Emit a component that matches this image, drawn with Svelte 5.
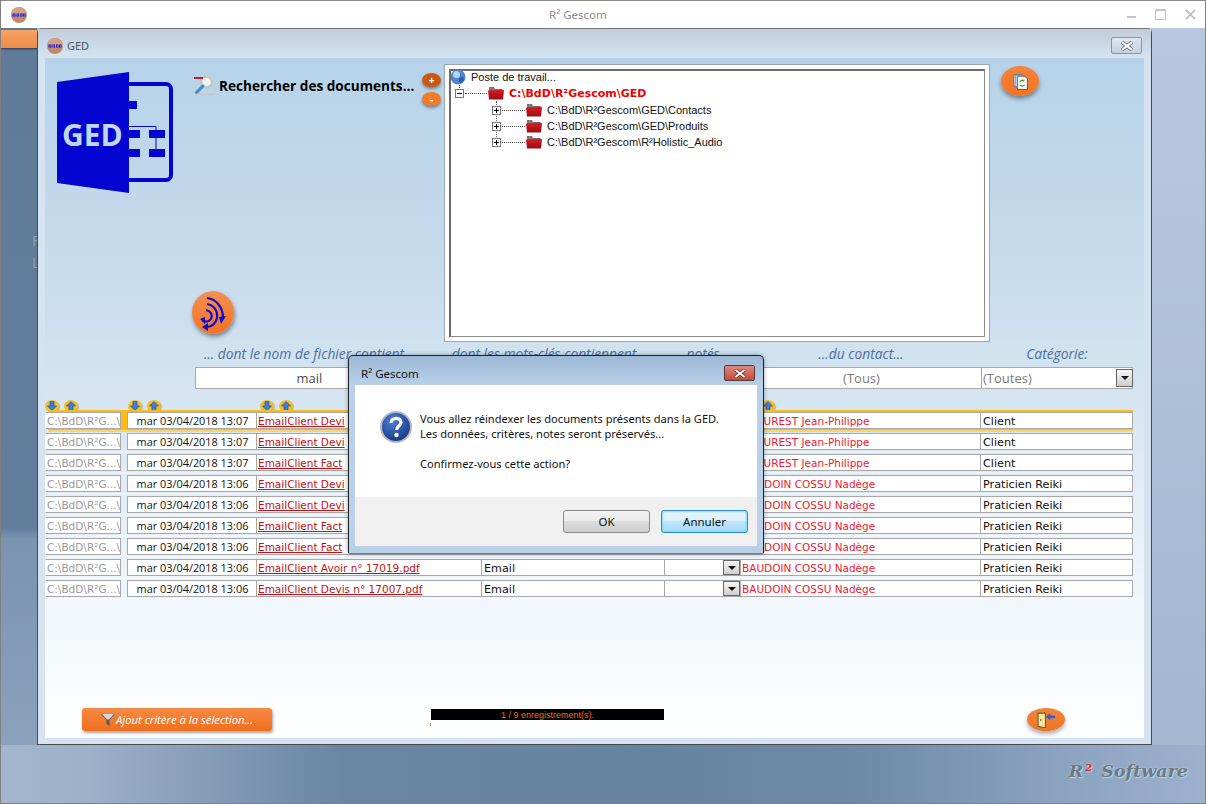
<script>
  const rows = [
    ['mar 03/04/2018 13:07', 'EmailClient Devi', '', 'AFOUREST Jean-Philippe', 'Client', true],
    ['mar 03/04/2018 13:07', 'EmailClient Devi', '', 'AFOUREST Jean-Philippe', 'Client'],
    ['mar 03/04/2018 13:07', 'EmailClient Fact', '', 'AFOUREST Jean-Philippe', 'Client'],
    ['mar 03/04/2018 13:06', 'EmailClient Devi', '', 'BAUDOIN COSSU Nadège', 'Praticien Reiki'],
    ['mar 03/04/2018 13:06', 'EmailClient Devi', '', 'BAUDOIN COSSU Nadège', 'Praticien Reiki'],
    ['mar 03/04/2018 13:06', 'EmailClient Fact', '', 'BAUDOIN COSSU Nadège', 'Praticien Reiki'],
    ['mar 03/04/2018 13:06', 'EmailClient Fact', '', 'BAUDOIN COSSU Nadège', 'Praticien Reiki'],
    ['mar 03/04/2018 13:06', 'EmailClient Avoir n° 17019.pdf', 'Email', 'BAUDOIN COSSU Nadège', 'Praticien Reiki'],
    ['mar 03/04/2018 13:06', 'EmailClient Devis n° 17007.pdf', 'Email', 'BAUDOIN COSSU Nadège', 'Praticien Reiki']
  ];
  const subfolders = ['C:\\BdD\\R²Gescom\\GED\\Contacts', 'C:\\BdD\\R²Gescom\\GED\\Produits', 'C:\\BdD\\R²Gescom\\R²Holistic_Audio'];
  const sortGroups = [['g1', 2], ['g2', 2], ['g3', 2], ['g4', 1]];
</script>

{#snippet appIcon()}
  <svg class="appicon" viewBox="0 0 16 16" aria-hidden="true">
    <circle cx="8" cy="8" r="8" fill="#c08a68" />
    <path d="M0 8a8 8 0 0 1 16 0z" fill="#d3a283" />
    <path d="M1.500 6.500h3v3h-3zM5.500 6.500h2.500v3h-2.500zM9 6.500h2.500v3h-2.500zM12 6.500h2.500v3h-2.500z" fill="#1414e6" />
    <path d="M2.500 7.500h1v1h-1zM6.300 7.500h1v1h-1zM9.800 7.500h1v1h-1zM12.800 7.500h1v1h-1z" fill="#d3c0c0" />
  </svg>
{/snippet}

{#snippet folder()}
  <svg class="folder" viewBox="0 0 16 14" aria-hidden="true">
    <defs>
      <linearGradient id="fg" x1="0" y1="0" x2="0" y2="1"><stop offset="0" stop-color="#dc1c24" /><stop offset="1" stop-color="#9c0c14" /></linearGradient>
    </defs>
    <path d="M1 1h5l1 2h7v3H1z" fill="#7a7a7a" />
    <path d="M0 4.500l15-1 1 1-1 9H1z" fill="url(#fg)" />
  </svg>
{/snippet}

{#snippet expander(sign)}
  <span class="expander">{#if sign === '+'}<i class="vbar"></i>{/if}<i class="hbar"></i></span>
{/snippet}

{#snippet dropBtn()}
  <span class="dropbtn"><i></i></span>
{/snippet}

{#snippet sortBtn(up)}
  <span class="sort">
    <svg viewBox="0 0 10 10" aria-hidden="true">
      {#if up}
        <path d="M5 .5L9.500 5H7v4.500H3V5H.5z" fill="#3a7ee6" stroke="#1b3f9c" stroke-width=".6" />
      {:else}
        <path d="M5 9.500L9.500 5H7V.5H3V5H.5z" fill="#3a7ee6" stroke="#1b3f9c" stroke-width=".6" />
      {/if}
    </svg>
  </span>
{/snippet}

<div class="screen">
  <header class="titlebar">
    {@render appIcon()}
    <span class="apptitle">R² Gescom</span>
    <div class="winctl">
      <span class="min"></span>
      <span class="max"></span>
      <svg class="x" viewBox="0 0 12 12" aria-hidden="true"><path d="M1 1l10 10M11 1L1 11" stroke="#c0c0c0" stroke-width="2" /></svg>
    </div>
  </header>

  <div class="desktop">
    <div class="tab"></div>
    <div class="ghost gh1">F</div>
    <div class="ghost gh2">L</div>

    <section class="ged">
      <div class="gedtitle">
        {@render appIcon()}
        <span>GED</span>
        <button class="gedclose" aria-label="Fermer">
          <svg viewBox="0 0 12 9" aria-hidden="true"><path d="M1.500 1l9 7M10.500 1l-9 7" stroke="#5e6876" stroke-width="3.400" /><path d="M1.500 1l9 7M10.500 1l-9 7" stroke="#fff" stroke-width="1.800" /></svg>
        </button>
      </div>

      <div class="panel">
        <div class="top">
          <svg class="logo" viewBox="0 0 117 122" aria-hidden="true">
            <path d="M71 12h38a5 5 0 0 1 5 5v86a5 5 0 0 1-5 5H71" fill="none" stroke="#0505d2" stroke-width="4" />
            <path d="M0 10L72 0V121L0 111z" fill="#0505d2" />
            <path d="M71 29h9v8h-9zM71 58h12v8H71zM71 77h12v8H71zM92 58h16v8H92zM92 77h16v8H92z" fill="#0505d2" />
            <path d="M71 54.500h28v3.500M99 66v11" fill="none" stroke="#0505d2" stroke-width="1" />
            <text x="5" y="74" class="logotext">GED</text>
          </svg>

          <div class="searchcol">
            <div class="heading">
              <svg viewBox="0 0 20 22" aria-hidden="true">
                <circle cx="12.500" cy="8" r="5.500" fill="#eef3f6" stroke="#c4c4c4" stroke-width="2.400" />
                <path d="M9 12L2.500 18.500" stroke="#3f8fc4" stroke-width="3" stroke-linecap="round" />
                <path d="M0 4h9" stroke="#c02028" stroke-width="2" />
                <path d="M2 20.500h17" stroke="#c6c6c6" stroke-width="1.200" />
              </svg>
              <h1>Rechercher des documents...</h1>
            </div>
            <button class="bigbtn" aria-label="Réindexer">
              <svg viewBox="0 0 42 43" aria-hidden="true">
                <g fill="none" stroke="#0a0ad8" stroke-width="2.200">
                  <path d="M15 7C24 8 31 16 31 27" />
                  <path d="M15 13C22 14 26 20 25 27C24 32 20 36 15 36" />
                  <path d="M14 19C19 20 21 24 19 28C17 31 13 31 11 30" />
                </g>
                <path d="M27 26l7-1-5 8zM16 32v8l-6-4zM13 26v7l-5-5z" fill="#0a0ad8" />
              </svg>
            </button>
          </div>

          <div class="plusminus">
            <button class="pm dark">+</button>
            <button class="pm">-</button>
          </div>

          <div class="treebox">
            <div class="tree">
              <i class="vline v1"></i>
              <i class="vline v2"></i>
              <div class="tnode root">
                <svg class="globe" viewBox="0 0 16 16" aria-hidden="true">
                  <circle cx="8" cy="8" r="7.500" fill="#4f86d0" />
                  <circle cx="6.500" cy="5.500" r="3.500" fill="#b9d2ef" />
                  <path d="M9 9l4-1 1 3-3 3-2-1z" fill="#2c5fb0" />
                </svg>
                <span>Poste de travail...</span>
              </div>
              <div class="tnode lvl1">
                {@render expander('-')}<i class="dots d1"></i>
                {@render folder()}
                <b>C:\BdD\R²Gescom\GED</b>
              </div>
              {#each subfolders as f}
                <div class="tnode lvl2">
                  {@render expander('+')}<i class="dots d2"></i>
                  {@render folder()}
                  <span class="ftext">{f}</span>
                </div>
              {/each}
            </div>
          </div>

          <button class="refresh" aria-label="Actualiser">
            <svg viewBox="0 0 16 16" aria-hidden="true">
              <path d="M1.500 1.500h8v11h-8z" fill="#c9d6ea" stroke="#50668c" stroke-width=".6" />
              <path d="M3 2h8v11H3z" fill="#dfe8f5" stroke="#50668c" stroke-width=".6" />
              <path d="M5 3h7l2.500 2.500v10H5z" fill="#f6f8fb" stroke="#3c5a8c" stroke-width=".9" />
              <path d="M7.500 8.500a2.300 2.300 0 0 1 4-.8M11.800 11a2.300 2.300 0 0 1-4 .3" fill="none" stroke="#5a9a1c" stroke-width="1.200" />
            </svg>
          </button>
        </div>

        <div class="labels fgrid">
          <span class="firstlabel">... dont le nom de fichier contient</span>
          <span>dont les mots-clés contiennent</span>
          <span>notés</span>
          <span>...du contact...</span>
          <span>Catégorie:</span>
        </div>

        <div class="filters fgrid">
          <span class="finput">mail</span>
          <span class="finput"></span>
          <span class="finput"></span>
          <span class="finput muted">(Tous)</span>
          <span class="finput muted left">(Toutes) <span class="catdrop">{@render dropBtn()}</span></span>
        </div>

        <div class="sortrow">
          {#each sortGroups as g}
            <span class="sortgroup {g[0]}">
              {#if g[1] === 2}{@render sortBtn(false)}{/if}
              {@render sortBtn(true)}
            </span>
          {/each}
        </div>

        <div class="rows">
          {#each rows as r}
            <div class="row" class:sel={r[5]}>
              <span class="cell path">C:\BdD\R²G...\</span>
              <span class="cell date">{r[0]}</span>
              <span class="cell link"><u>{r[1]}</u></span>
              <span class="cell txt">{r[2]}</span>
              <span class="cell notes">{@render dropBtn()}</span>
              <span class="cell contact">{r[3]}</span>
              <span class="cell txt">{r[4]}</span>
            </div>
          {/each}
        </div>

        <div class="footer">
          <button class="addcrit">
            <svg viewBox="0 0 14 14" aria-hidden="true">
              <path d="M0 1h14L8.500 7v6L5.500 11V7z" fill="#5a5a5a" />
              <path d="M1 1h12L8 6.500H6z" fill="#d8d8d8" />
            </svg>
            <span>Ajout critère à la sélection...</span>
          </button>
          <div class="status">
            <div class="statusbar">1 / 9 enregistrement(s).</div>
            <i class="tick"></i>
          </div>
          <button class="exit" aria-label="Quitter">
            <svg viewBox="0 0 17 15" aria-hidden="true">
              <path d="M1 1h7v14l-7-1.500z" fill="#f6e79a" stroke="#6a5c2c" stroke-width="1" />
              <path d="M3 6.500h1v2H3z" fill="#6a5c2c" />
              <path d="M8.500 4.500L12.500 1v2.200H17v2.600h-4.500V8z" fill="#2e62d0" />
            </svg>
          </button>
        </div>
      </div>
    </section>

    <div class="brand"><span>R</span><sup>2</sup><span class="sw">Software</span></div>
  </div>

  <div class="dialog" role="dialog">
    <div class="dtitle">
      <span>R² Gescom</span>
      <button class="dclose" aria-label="Fermer">
        <svg viewBox="0 0 12 9" aria-hidden="true"><path d="M1.500 1l9 7M10.500 1l-9 7" stroke="#5c2a22" stroke-width="3.200" /><path d="M1.500 1l9 7M10.500 1l-9 7" stroke="#fff" stroke-width="1.800" /></svg>
      </button>
    </div>
    <div class="dbody">
      <div class="dmsg">
        <svg class="qicon" viewBox="0 0 32 32" aria-hidden="true">
          <defs>
            <radialGradient id="qg" cx=".4" cy=".3" r=".8"><stop offset="0" stop-color="#4f7fd6" /><stop offset="1" stop-color="#10307c" /></radialGradient>
          </defs>
          <circle cx="16" cy="16" r="15" fill="url(#qg)" stroke="#b4b8be" stroke-width="2" />
          <path d="M11 12c0-6 10-6 10-.5 0 3.500-4.500 3.500-4.500 7.500" fill="none" stroke="#fff" stroke-width="3.200" />
          <circle cx="16.500" cy="24" r="2.200" fill="#fff" />
        </svg>
        <p>Vous allez réindexer les documents présents dans la GED.<br />Les données, critères, notes seront préservés...<br /><br />Confirmez-vous cette action?</p>
      </div>
      <div class="dfoot">
        <button class="dbtn">OK</button>
        <button class="dbtn focus">Annuler</button>
      </div>
    </div>
  </div>
</div>

<style>
  :global(body) { margin: 0; background: #8aa2bd; }
  .screen {
    position: relative;
    width: 1206px;
    height: 804px;
    box-sizing: border-box;
    border: 1px solid #808080;
    border-top-color: #888;
    display: flex;
    flex-direction: column;
    overflow: hidden;
    font-family: "Open Sans", sans-serif;
    background: linear-gradient(90deg, #a3b6ce 0, #9cb0c8 90px, #6a86a3 340px, #66839f 650px, #6d89a6 850px, #8ba3bf 1060px, #9db1cd 1206px);
  }
  button { font-family: inherit; padding: 0; cursor: default; }

  .titlebar { height: 27px; flex: none; background: #fff; display: flex; align-items: center; position: relative; }
  .appicon { width: 16px; height: 16px; flex: none; }
  .titlebar .appicon { margin-left: 10px; }
  .apptitle { position: absolute; left: 548px; top: 6px; font-size: 11.500px; color: #8d8d8d; font-family: "Noto Sans", sans-serif; }
  .winctl { margin-left: auto; display: flex; align-items: center; margin-right: 9px; }
  .min { width: 9px; height: 2px; background: #c4c4c4; margin-top: 4px; margin-right: 19px; }
  .max { width: 9px; height: 8px; border: 1px solid #c4c4c4; border-top-width: 2px; margin-right: 19px; }
  .x { width: 11px; height: 11px; }

  .desktop {
    flex: 1;
    position: relative;
    padding-left: 36px;
    background:
      linear-gradient(180deg, #5f7b99 0, #627e9c 500px, #7a93af 510px, #8aa2bc 717px) left top / 36px 717px no-repeat,
      linear-gradient(180deg, #b8c8e0 0, #a4b7d0 717px) right top / 55px 717px no-repeat;
  }
  .tab { position: absolute; left: 0; top: 2px; width: 37px; height: 18px; background: linear-gradient(180deg, #f7a364, #ee8c4a); box-shadow: 0 1px 2px #334; }
  .ghost { position: absolute; left: 31px; font-size: 14px; color: #8da2b8; }
  .gh1 { top: 203px; }
  .gh2 { top: 225px; }

  .ged {
    position: relative;
    width: 1115px;
    height: 717px;
    box-sizing: border-box;
    border: 1px solid #4a4a4a;
    border-top-color: #777;
    border-radius: 5px 5px 0 0;
    background: #d6e4f2;
    display: flex;
    flex-direction: column;
  }
  .gedtitle {
    height: 29px;
    flex: none;
    display: flex;
    align-items: center;
    padding-left: 9px;
    gap: 4px;
    font-size: 11px;
    color: #4a5568;
    font-family: "Noto Sans", sans-serif;
    background: linear-gradient(180deg, #c0ccd9, #d6e4f2);
  }
  .gedtitle > span { margin-top: 4px; }
  .gedtitle .appicon { margin-top: 4px; }
  .gedclose {
    margin-left: auto;
    margin-right: 9px;
    margin-top: 4px;
    width: 31px;
    height: 17px;
    border: 1px solid #8995ab;
    border-radius: 2px;
    background: linear-gradient(180deg, #dde6f0, #c5d2e2);
    display: flex;
    align-items: center;
    justify-content: center;
  }
  .gedclose svg { width: 14px; height: 10px; }

  .panel {
    margin: 0 7px;
    height: 680px;
    display: flex;
    flex-direction: column;
    background: linear-gradient(180deg, #b7d3e9 0, #c6dbec 30%, #d6e5f1 50%, #f0f6fb 80%, #ffffff 100%);
  }

  .top { height: 284px; flex: none; display: flex; align-items: flex-start; }
  .logo { width: 117px; height: 122px; margin: 14px 0 0 12px; flex: none; }
  .logotext { font-family: "Open Sans", sans-serif; font-weight: 700; font-size: 30px; fill: #c1d7ea; }
  .searchcol { width: 230px; height: 276px; margin-left: 18px; display: flex; flex-direction: column; }
  .heading { display: flex; align-items: center; gap: 5px; margin-top: 16px; }
  .heading svg { width: 20px; height: 22px; margin-left: 2px; flex: none; }
  .heading h1 { margin: 0; font-size: 13.600px; font-weight: 700; color: #000; white-space: nowrap; font-family: "Open Sans", sans-serif; }
  .bigbtn {
    margin-top: auto;
    width: 42px;
    height: 43px;
    border: 0;
    border-radius: 50%;
    background: linear-gradient(180deg, #f48f52, #f47320);
    box-shadow: 1px 3px 4px rgba(40, 50, 70, 0.5);
    display: flex;
  }
  .bigbtn svg { width: 42px; height: 43px; }

  .plusminus { display: flex; flex-direction: column; gap: 5px; margin-top: 15px; flex: none; }
  .pm {
    width: 19px;
    height: 14px;
    border: 0;
    border-radius: 50%;
    background: #f47a26;
    color: #fff;
    font-size: 10px;
    font-weight: 700;
    line-height: 14px;
    box-shadow: 0 2px 3px rgba(40, 50, 70, 0.5);
  }
  .pm.dark { background: #c9590f; }

  .treebox {
    margin: 6px 0 0 3px;
    width: 546px;
    height: 278px;
    box-sizing: border-box;
    flex: none;
    border: 1px solid #9aa6b0;
    padding: 4px;
    background: #fff;
  }
  .tree {
    height: 100%;
    box-sizing: border-box;
    border: 2px solid #6b6b6b;
    border-right: 1px solid #8c8c8c;
    border-bottom: 1px solid #8c8c8c;
    font-family: "Liberation Sans", sans-serif;
    font-size: 11px;
    color: #111;
    position: relative;
  }
  .tnode { display: flex; align-items: center; height: 16px; white-space: nowrap; position: relative; }
  .root { gap: 5px; margin-left: -1px; margin-top: -2px; }
  .globe { width: 16px; height: 16px; flex: none; }
  .lvl1 { padding-left: 4px; margin-bottom: 1px; }
  .lvl1 b { color: #f00000; font-family: "DejaVu Sans", sans-serif; font-size: 11px; margin-left: 5px; }
  .lvl2 { padding-left: 41px; }
  .ftext { margin-left: 5px; }
  .expander {
    position: relative;
    width: 9px;
    height: 9px;
    box-sizing: border-box;
    border: 1px solid #777;
    background: #fff;
    flex: none;
  }
  .hbar { position: absolute; left: 1px; top: 3px; width: 5px; height: 1px; background: #000; }
  .vbar { position: absolute; left: 3px; top: 1px; width: 1px; height: 5px; background: #000; }
  .dots { height: 0; border-top: 1px dotted #555; flex: none; }
  .d1 { width: 22px; margin: 0 1px; }
  .d2 { width: 23px; margin: 0 1px; }
  .vline { position: absolute; width: 0; border-left: 1px dotted #555; }
  .v1 { left: 8px; top: 14px; height: 5px; }
  .v2 { left: 45px; top: 30px; height: 44px; }
  .folder { width: 16px; height: 14px; flex: none; }

  .refresh {
    margin: 8px 0 0 11px;
    width: 38px;
    height: 30px;
    border: 0;
    border-radius: 50%;
    flex: none;
    background: linear-gradient(180deg, #f4843c, #f47320);
    box-shadow: 0 3px 4px rgba(40, 50, 70, 0.5);
    display: flex;
    align-items: center;
    justify-content: center;
  }
  .refresh svg { width: 17px; height: 17px; }

  .fgrid { display: grid; grid-template-columns: 228px 242px 76px 240px 152px; margin-left: 150px; flex: none; }
  .labels { height: 25px; box-sizing: border-box; padding-bottom: 2px; align-items: center; font-size: 13.800px; font-style: italic; color: #4c709c; text-align: center; white-space: nowrap; }
  .firstlabel { padding-right: 10px; }
  .filters { height: 22px; background: #fff; width: 938px; box-sizing: border-box; border: 1px solid #a8a8a8; }
  .finput { display: flex; align-items: center; justify-content: center; font-size: 13px; color: #4d4d4d; border-right: 1px solid #a8a8a8; position: relative; padding-bottom: 1px; }
  .finput:last-child { border-right: 0; }
  .finput.muted { color: #7b7b7b; }
  .finput.left { justify-content: flex-start; padding-left: 1px; }
  .catdrop { position: absolute; right: 1px; top: 1px; width: 17px; bottom: 1px; display: flex; }

  .dropbtn {
    display: flex;
    flex: none;
    width: 17px;
    height: 100%;
    box-sizing: border-box;
    border: 1px solid #666;
    background: linear-gradient(180deg, #f6f6f6, #cfcfcf);
    align-items: center;
    justify-content: center;
  }
  .dropbtn i { width: 0; height: 0; border: 4px solid transparent; border-top-color: #111; border-bottom-width: 0; }

  .sortrow { height: 23px; flex: none; position: relative; }
  .sortgroup { position: absolute; top: 11px; display: flex; gap: 5px; }
  .sortgroup.g1 { left: 0; }
  .sortgroup.g2 { left: 83px; }
  .sortgroup.g3 { left: 215px; }
  .sortgroup.g4 { left: 716px; }
  .sort { width: 14px; height: 12px; border-radius: 50%; background: #f4c020; display: flex; align-items: center; justify-content: center; box-shadow: 1px 1px 1px rgba(60, 60, 60, 0.3); }
  .sort svg { width: 10px; height: 10px; }

  .rows { display: flex; flex-direction: column; gap: 4px; flex: none; }
  .row {
    position: relative;
    isolation: isolate;
    display: grid;
    grid-template-columns: 82px 130px 225px 183px 76px 240px 152px;
    height: 17px;
    width: 1088px;
    font-family: "DejaVu Sans", sans-serif;
    font-size: 10.500px;
  }
  .row::after { content: ""; position: absolute; left: 3px; right: 0; top: 18px; height: 2px; background: rgba(255, 255, 255, 0.35); z-index: -1; }
  .row.sel::before { content: ""; position: absolute; left: 3px; right: 0; top: -2px; bottom: -3px; background: #fcbc12; z-index: -1; }
  .cell {
    display: flex;
    align-items: center;
    box-sizing: border-box;
    background: #fff;
    border: 1px solid #a8a8a8;
    border-left-width: 0;
    padding-left: 1px;
    white-space: nowrap;
    overflow: hidden;
  }
  .path { color: #9a9a9a; border-left-width: 1px; border-left-color: #fff; width: 76px; }
  .date { color: #111; justify-content: center; border-left-width: 1px; font-family: "Open Sans", sans-serif; font-size: 10.900px; }
  .link { color: #c41010; }
  .link u { text-decoration-thickness: 1px; text-underline-offset: 1px; }
  .txt { color: #111; font-size: 11.200px; padding-left: 2px; padding-top: 1px; }
  .contact { color: #f01830; }
  .notes { justify-content: flex-end; padding-left: 0; }

  .footer { margin-top: auto; height: 23px; flex: none; display: flex; align-items: flex-start; padding-bottom: 7px; }
  .addcrit {
    margin-left: 37px;
    width: 190px;
    height: 23px;
    border: 0;
    border-radius: 3px;
    background: linear-gradient(180deg, #f58a44, #ef6f1c);
    box-shadow: 1px 2px 3px rgba(50, 50, 60, 0.45);
    color: #fff;
    font-size: 11.300px;
    font-style: italic;
    display: flex;
    align-items: center;
    justify-content: center;
    gap: 1px;
  }
  .addcrit svg { width: 14px; height: 14px; }
  .status { margin-left: 158px; margin-top: 1px; width: 234px; display: flex; flex-direction: column; }
  .statusbar { margin-left: 1px; height: 11px; background: #000; color: #f46a10; font-family: "Liberation Sans", sans-serif; font-size: 9px; line-height: 12px; text-align: center; }
  .tick { display: block; width: 1px; height: 3px; margin-top: 3px; background: #f47320; }
  .exit {
    margin-left: 363px;
    width: 38px;
    height: 23px;
    border: 0;
    border-radius: 50%;
    background: linear-gradient(180deg, #f4843c, #ee7428);
    box-shadow: 0 3px 4px rgba(50, 50, 60, 0.4);
    display: flex;
    align-items: center;
    justify-content: center;
  }
  .exit svg { width: 18px; height: 16px; }

  .brand {
    position: absolute;
    right: 17px;
    bottom: 23px;
    display: flex;
    align-items: flex-start;
    font-family: "DejaVu Serif", serif;
    font-style: italic;
    font-weight: 700;
    font-size: 17.500px;
    line-height: 18px;
    color: #777;
    text-shadow: 0 0 2px #a8d8ff, 1px 1px 1px #a8d8ff;
    white-space: nowrap;
  }
  .brand sup { color: #f02010; font-size: 10px; line-height: 12px; margin: 0 9px 0 2px; }

  .dialog {
    position: absolute;
    left: 347px;
    top: 354px;
    width: 416px;
    height: 199px;
    box-sizing: border-box;
    border: 1px solid #222;
    border-bottom-color: #10a0c0;
    border-radius: 5px 5px 2px 2px;
    background: linear-gradient(180deg, #9db8d6, #b9d0e8 15%, #b9d0e8);
    box-shadow: 0 0 4px rgba(30, 50, 70, 0.45);
    display: flex;
    flex-direction: column;
    padding: 0 6px 7px;
  }
  .dtitle { height: 29px; flex: none; display: flex; align-items: center; font-size: 11.500px; color: #111; font-family: "Noto Sans", sans-serif; }
  .dtitle span { margin-left: 6px; margin-top: 5px; }
  .dclose {
    margin-left: auto;
    margin-right: 2px;
    margin-top: 5px;
    width: 31px;
    height: 16px;
    border: 1px solid #5a3a38;
    border-radius: 2px;
    background: linear-gradient(180deg, #dc8a80, #c24a3c);
    display: flex;
    align-items: center;
    justify-content: center;
  }
  .dclose svg { width: 12px; height: 9px; }
  .dbody { flex: 1; background: #fff; display: flex; flex-direction: column; }
  .dmsg { flex: 1; display: flex; padding: 26px 0 0 25px; gap: 8px; }
  .qicon { width: 32px; height: 32px; flex: none; }
  .dmsg p { margin: 0; font-family: "Noto Sans", sans-serif; font-size: 11.100px; line-height: 15px; color: #111; white-space: nowrap; }
  .dfoot { height: 49px; flex: none; background: #f0f0f0; display: flex; justify-content: flex-end; align-items: center; gap: 11px; padding-right: 9px; }
  .dbtn {
    width: 87px;
    height: 23px;
    border: 1px solid #8a8a8a;
    border-radius: 3px;
    background: linear-gradient(180deg, #f2f2f2 0, #ebebeb 48%, #dcdcdc 50%, #cfcfcf 100%);
    font-family: "Noto Sans", sans-serif;
    font-size: 11.500px;
    color: #111;
  }
  .dbtn.focus { border-color: #2c8cc4; box-shadow: inset 0 0 2px 1px #7fdcf4; background: linear-gradient(180deg, #eaf6fd 0, #d9f0fc 48%, #bee6fd 50%, #a7d9f5 100%); }
</style>
